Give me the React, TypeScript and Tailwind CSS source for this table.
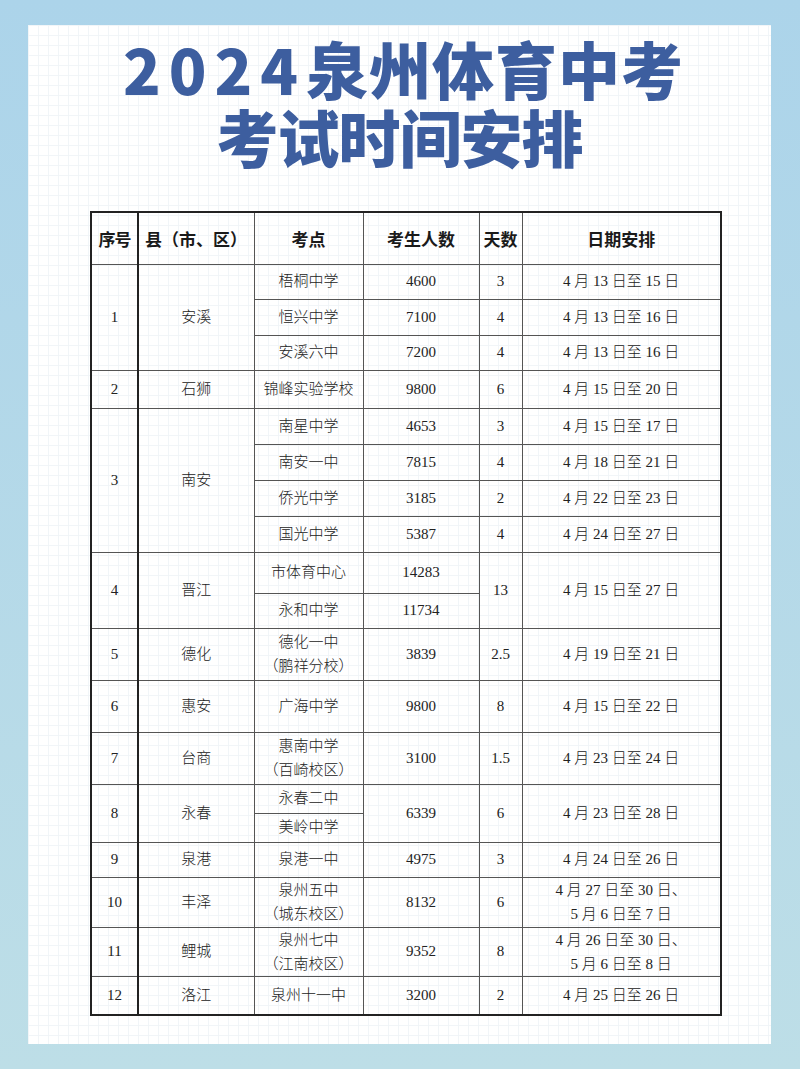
import React from "react";

type Cell = {
  text: string | string[];
  rowSpan?: number;
};

const serif = "[font-family:'Liberation_Serif','Noto_Sans_CJK_SC',serif]";

const Lines = ({ text }: { text: string | string[] }) => {
  if (Array.isArray(text)) {
    return (
      <div className="flex flex-col items-center leading-[24px]">
        {text.map((t, i) => (
          <span key={i}>{t}</span>
        ))}
      </div>
    );
  }
  return <>{text}</>;
};

// each row: height + cells
const rows: { h: string; cells: Cell[] }[] = [
  {
    h: "h-[35px]",
    cells: [
      { text: "1", rowSpan: 3 },
      { text: "安溪", rowSpan: 3 },
      { text: "梧桐中学" },
      { text: "4600" },
      { text: "3" },
      { text: "4 月 13 日至 15 日" },
    ],
  },
  { h: "h-[36px]", cells: [{ text: "恒兴中学" }, { text: "7100" }, { text: "4" }, { text: "4 月 13 日至 16 日" }] },
  { h: "h-[35px]", cells: [{ text: "安溪六中" }, { text: "7200" }, { text: "4" }, { text: "4 月 13 日至 16 日" }] },
  {
    h: "h-[38px]",
    cells: [
      { text: "2" },
      { text: "石狮" },
      { text: "锦峰实验学校" },
      { text: "9800" },
      { text: "6" },
      { text: "4 月 15 日至 20 日" },
    ],
  },
  {
    h: "h-[36px]",
    cells: [
      { text: "3", rowSpan: 4 },
      { text: "南安", rowSpan: 4 },
      { text: "南星中学" },
      { text: "4653" },
      { text: "3" },
      { text: "4 月 15 日至 17 日" },
    ],
  },
  { h: "h-[36px]", cells: [{ text: "南安一中" }, { text: "7815" }, { text: "4" }, { text: "4 月 18 日至 21 日" }] },
  { h: "h-[36px]", cells: [{ text: "侨光中学" }, { text: "3185" }, { text: "2" }, { text: "4 月 22 日至 23 日" }] },
  { h: "h-[36px]", cells: [{ text: "国光中学" }, { text: "5387" }, { text: "4" }, { text: "4 月 24 日至 27 日" }] },
  {
    h: "h-[41px]",
    cells: [
      { text: "4", rowSpan: 2 },
      { text: "晋江", rowSpan: 2 },
      { text: "市体育中心" },
      { text: "14283" },
      { text: "13", rowSpan: 2 },
      { text: "4 月 15 日至 27 日", rowSpan: 2 },
    ],
  },
  { h: "h-[35px]", cells: [{ text: "永和中学" }, { text: "11734" }] },
  {
    h: "h-[52px]",
    cells: [
      { text: "5" },
      { text: "德化" },
      { text: ["德化一中", "（鹏祥分校）"] },
      { text: "3839" },
      { text: "2.5" },
      { text: "4 月 19 日至 21 日" },
    ],
  },
  {
    h: "h-[52px]",
    cells: [
      { text: "6" },
      { text: "惠安" },
      { text: "广海中学" },
      { text: "9800" },
      { text: "8" },
      { text: "4 月 15 日至 22 日" },
    ],
  },
  {
    h: "h-[52px]",
    cells: [
      { text: "7" },
      { text: "台商" },
      { text: ["惠南中学", "（百崎校区）"] },
      { text: "3100" },
      { text: "1.5" },
      { text: "4 月 23 日至 24 日" },
    ],
  },
  {
    h: "h-[29px]",
    cells: [
      { text: "8", rowSpan: 2 },
      { text: "永春", rowSpan: 2 },
      { text: "永春二中" },
      { text: "6339", rowSpan: 2 },
      { text: "6", rowSpan: 2 },
      { text: "4 月 23 日至 28 日", rowSpan: 2 },
    ],
  },
  { h: "h-[29px]", cells: [{ text: "美岭中学" }] },
  {
    h: "h-[35px]",
    cells: [
      { text: "9" },
      { text: "泉港" },
      { text: "泉港一中" },
      { text: "4975" },
      { text: "3" },
      { text: "4 月 24 日至 26 日" },
    ],
  },
  {
    h: "h-[50px]",
    cells: [
      { text: "10" },
      { text: "丰泽" },
      { text: ["泉州五中", "（城东校区）"] },
      { text: "8132" },
      { text: "6" },
      { text: ["4 月 27 日至 30 日、", "5 月 6 日至 7 日"] },
    ],
  },
  {
    h: "h-[47px]",
    cells: [
      { text: "11" },
      { text: "鲤城" },
      { text: ["泉州七中", "（江南校区）"] },
      { text: "9352" },
      { text: "8" },
      { text: ["4 月 26 日至 30 日、", "5 月 6 日至 8 日"] },
    ],
  },
  {
    h: "h-[39px]",
    cells: [
      { text: "12" },
      { text: "洛江" },
      { text: "泉州十一中" },
      { text: "3200" },
      { text: "2" },
      { text: "4 月 25 日至 26 日" },
    ],
  },
];

const headers = ["序号", "县（市、区）", "考点", "考生人数", "天数", "日期安排"];

export default function App() {
  return (
    <div className="w-[800px] h-[1069px] bg-[linear-gradient(to_bottom,#acd4ea,#bddee7)] pt-[25px] pl-[28px] pr-[29px] pb-[25px]">
      <div className="h-[1019px] bg-white bg-[linear-gradient(to_right,#f1f5f8_1px,transparent_1px),linear-gradient(to_bottom,#f1f5f8_1px,transparent_1px)] bg-[size:10px_10px] flex flex-col">
        {/* title */}
        <div className="pt-[12px] flex flex-col items-center gap-[6px] text-[#3d5e9f] font-black leading-none text-[62px] [font-family:'Noto_Sans_CJK_SC',sans-serif]">
          <div className="tracking-[1px] ml-[8px]">
            <span className="tracking-[8px]">2024</span>泉州体育中考
          </div>
          <div className="tracking-[-1px]">考试时间安排</div>
        </div>

        {/* table */}
        <div className="mt-[44px] ml-[62px] w-[630px]">
          <table className={`w-[630px] table-fixed border-collapse border-2 border-[#222] text-[15px] text-[#222] ${serif}`}>
            <colgroup>
              <col className="w-[47px]" />
              <col className="w-[116px]" />
              <col className="w-[109px]" />
              <col className="w-[116px]" />
              <col className="w-[43px]" />
              <col className="w-[199px]" />
            </colgroup>
            <thead>
              <tr className="h-[52px]">
                {headers.map((h, i) => (
                  <th
                    key={h}
                    className={`border border-[#555] text-[17px] font-bold text-[#1a1a1a] whitespace-nowrap [font-family:'Noto_Sans_CJK_SC',sans-serif] ${
                      i === 0 ? "border-r-2 border-r-[#222] tracking-[-1px]" : ""
                    } ${i === 1 ? "text-left pl-[6px]" : ""}`}
                  >
                    {h}
                  </th>
                ))}
              </tr>
            </thead>
            <tbody>
              {rows.map((r, ri) => {
                const full = r.cells.length === 6;
                return (
                  <tr key={ri} className={r.h}>
                    {r.cells.map((c, ci) => (
                      <td
                        key={ci}
                        rowSpan={c.rowSpan}
                        className={`border border-[#555] text-center align-middle whitespace-nowrap font-light p-0 ${
                          full && ci === 0 ? "border-r-2 border-r-[#222]" : ""
                        }`}
                      >
                        <Lines text={c.text} />
                      </td>
                    ))}
                  </tr>
                );
              })}
            </tbody>
          </table>
        </div>
      </div>
    </div>
  );
}
